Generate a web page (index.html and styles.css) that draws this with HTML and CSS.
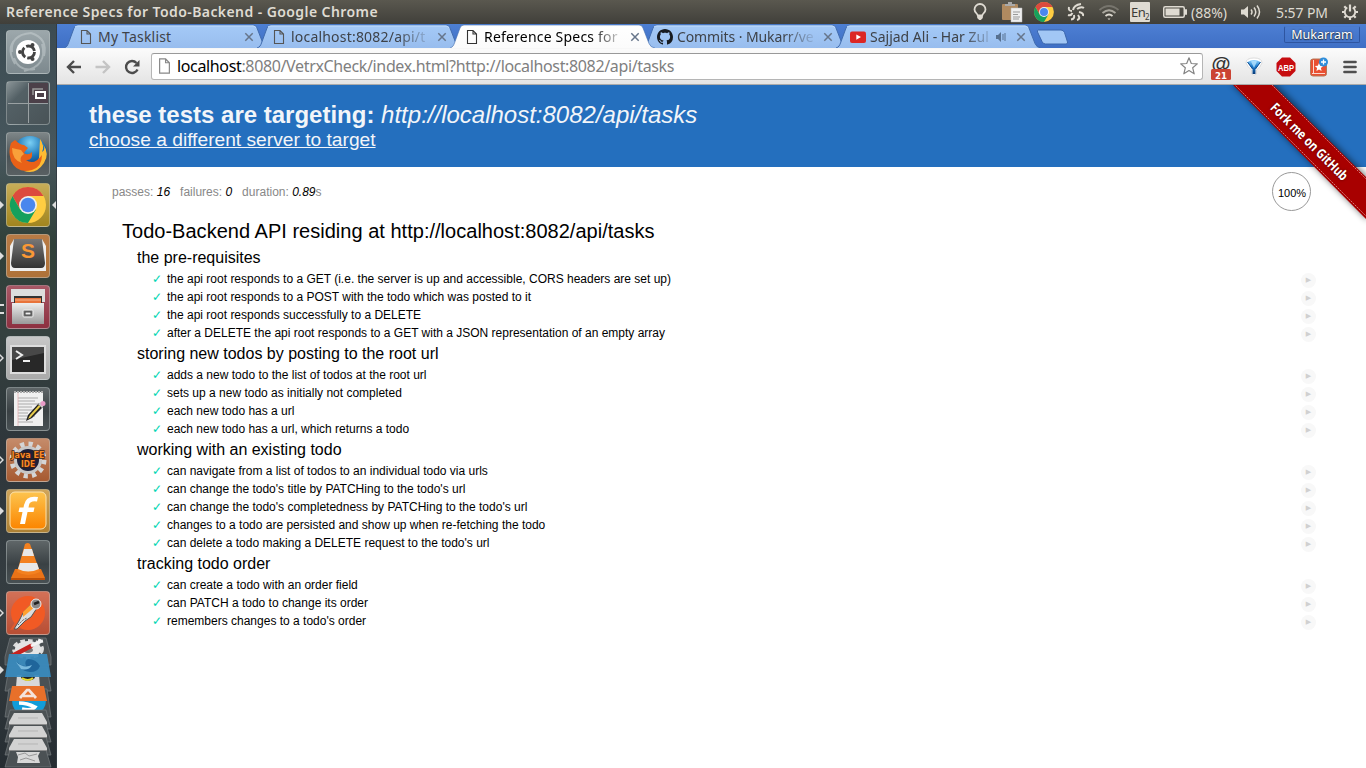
FILE: index.html
```html
<!DOCTYPE html>
<html lang="en">
<head>
<meta charset="utf-8">
<title>Reference Specs for Todo-Backend</title>
<link rel="stylesheet" href="styles.css">
</head>
<body>
<svg class="defs" width="0" height="0">
  <defs>
    <linearGradient id="tabFill" x1="0" y1="0" x2="0" y2="1"><stop offset="0" stop-color="#a5caf7"/><stop offset="1" stop-color="#98bdee"/></linearGradient>
    <linearGradient id="tabOn" x1="0" y1="0" x2="0" y2="1"><stop offset="0" stop-color="#fff"/><stop offset="1" stop-color="#fbfbfb"/></linearGradient>
    <linearGradient id="orange" x1="0" y1="0" x2="0" y2="1"><stop offset="0" stop-color="#fdc44e"/><stop offset="1" stop-color="#fb8500"/></linearGradient>
    <linearGradient id="silver" x1="0" y1="0" x2="0" y2="1"><stop offset="0" stop-color="#eee"/><stop offset="1" stop-color="#999"/></linearGradient>
    <linearGradient id="dark" x1="0" y1="0" x2="0" y2="1"><stop offset="0" stop-color="#777"/><stop offset="1" stop-color="#333"/></linearGradient>
    <linearGradient id="balloon" x1="0" y1="0" x2="0" y2="1"><stop offset="0" stop-color="#8fd4ff"/><stop offset=".45" stop-color="#1c7ccd"/><stop offset="1" stop-color="#093b78"/></linearGradient>
    <radialGradient id="globe" cx=".5" cy=".2" r=".8"><stop offset="0" stop-color="#7bd0f5"/><stop offset=".5" stop-color="#1d76b8"/><stop offset="1" stop-color="#0a2a66"/></radialGradient>
    <symbol id="page" viewBox="0 0 12 16"><path d="M1.500 1.500h5.500l3.500 3.500v9.500h-9zM7 1.500V5h3.500" fill="none" stroke="currentColor" stroke-width="1.100"/></symbol>
    <symbol id="close" viewBox="0 0 10 10"><path d="M1.300 1.300l7.400 7.400M8.700 1.300L1.300 8.700" stroke="currentColor" stroke-width="1.500"/></symbol>
    <symbol id="tab" viewBox="0 0 207 24"><path d="M0 24C3 23 3.500 21.500 4.500 19L10 4Q11 1 14 1H189Q192 1 193 4L199 19.500Q200.500 23.500 205 24" fill="url(#tabFill)" stroke="#416cae"/><path d="M11 3Q12 2 14 2H189Q191.500 2 192 4" fill="none" stroke="#c3dcfb"/></symbol>
    <symbol id="tabActive" viewBox="0 0 207 24"><path d="M0 24C3 23 3.500 21.500 4.500 19L10 4Q11 1 14 1H189Q192 1 193 4L199 19.500Q200.500 23.500 205 24" fill="url(#tabOn)" stroke="#416cae" stroke-opacity=".6"/></symbol>
    <symbol id="chrome" viewBox="0 0 40 40"><circle cx="20" cy="20" r="18" fill="#ffcd42"/><path d="M20 11H35.600A18 18 0 0 0 4.400 11L12 24z" fill="#dc4a3e"/><path d="M4.400 11A18 18 0 0 0 20 38L28 24.500H20L12.200 24.500z" fill="#16a05d"/><circle cx="20" cy="20" r="9" fill="#eee"/><circle cx="20" cy="20" r="7.300" fill="#4a87ed"/></symbol>
  </defs>
</svg>

<header class="panel">
  <span class="panel-title">Reference Specs for Todo-Backend - Google Chrome</span>
  <div class="indicators">
    <svg class="i-bulb" width="14" height="18" viewBox="0 0 14 18"><path d="M4.800 12.500C4.500 10.500 1.500 9.500 1.500 6.500A5.500 5.500 0 0 1 12.500 6.500C12.500 9.500 9.500 10.500 9.200 12.500z" fill="none" stroke="#dfdbd2" stroke-width="1.800"/><path d="M4.200 13h5.600v2l-2 2h-1.600l-2-2z" fill="#dfdbd2"/></svg>
    <svg class="i-clip" width="22" height="22" viewBox="0 0 22 22"><rect x="1" y="3" width="16" height="16" rx="1" fill="#b08a60"/><path d="M4 5V3h3V1h4v2h3v2z" fill="#aaa"/><path d="M10 7h11v14H10z" fill="#eee" stroke="#bbb" stroke-width=".5"/><path d="M12 11h7M12 13.500h5M12 16h7M12 18h6" stroke="#999"/></svg>
    <svg class="i-chrome" width="22" height="22"><use href="#chrome"/></svg>
    <svg class="i-swirl" width="18" height="20" viewBox="0 0 18 20"><g fill="none" stroke="#dfdbd2" stroke-width="2"><path d="M6 8Q7 3 14 2"/><path d="M10 7Q14 4 17 6"/><path d="M12 10Q17 11 16 14"/><path d="M11 13Q14 17 10 18"/><path d="M7 13Q8 17 4 17.500"/><path d="M5.500 11Q4 14 1 13"/><path d="M5 9Q1 9 2 5"/></g></svg>
    <svg class="i-wifi" width="22" height="18" viewBox="0 0 22 18"><g fill="none" stroke-width="1.800"><path d="M1.500 7Q11-1 20.500 7" stroke="#77756d"/><path d="M4.500 10Q11 4.500 17.500 10" stroke="#aaa79e"/><path d="M7.500 13Q11 10 14.500 13" stroke="#dfdbd2"/></g><path d="M9.500 15.500h3L11 17z" fill="#dfdbd2"/></svg>
    <span class="keyboard">En<sub>2</sub></span>
    <svg class="i-battery" width="25" height="12" viewBox="0 0 25 12"><rect x=".75" y=".75" width="20.500" height="10.500" rx="1.500" fill="none" stroke="#dfdbd2" stroke-width="1.500"/><rect x="2.500" y="2.500" width="14" height="7" fill="#dfdbd2"/><path d="M22.500 3.500h1v5h-1z" stroke="#dfdbd2" fill="none"/></svg>
    <span class="battery-text">(88%)</span>
    <svg class="i-sound" width="21" height="16" viewBox="0 0 21 16"><path d="M1 5.500h3L8 2v12L4 10.500H1z" fill="#dfdbd2"/><path d="M11 5.500q2 2.500 0 5M14 3.500q3.500 4.500 0 9M17 1.500q5 6.500 0 13" fill="none" stroke="#dfdbd2" stroke-width="1.500"/></svg>
    <span class="clock">5:57 PM</span>
    <svg class="i-gear" width="18" height="18" viewBox="0 0 18 18"><g stroke="#dfdbd2" stroke-width="2.200"><path d="M9 1.500v7"/><path d="M14.300 9H17M12.800 12.800l1.900 1.900M9 14.300V17M5.200 12.800l-1.900 1.900M3.700 9H1M5.200 5.200L3.300 3.300M12.800 5.200l1.900-1.900"/></g><path d="M6.300 4.600A5.200 5.200 0 1 0 11.700 4.600" fill="none" stroke="#dfdbd2" stroke-width="1.800"/></svg>
  </div>
</header>

<div class="desktop">
  <nav class="launcher">
    <div class="tile dash"><svg viewBox="0 0 44 44"><path d="M6 22Q4 5 25 3Q42 8 38 26M9 34Q-2 15 14 6M18 41Q42 36 36 14M8 28Q13 42 29 39" fill="none" stroke="#c9d1d4" stroke-opacity=".5" stroke-width="2"/><circle cx="22" cy="22" r="12" fill="#fff"/><circle cx="22.500" cy="22" r="6" fill="none" stroke="#444" stroke-width="2.800" stroke-dasharray="10.500 2.070"/><g fill="#444"><circle cx="14" cy="22" r="2"/><circle cx="26.500" cy="15" r="2"/><circle cx="26.500" cy="29" r="2"/></g></svg></div>
    <div class="tile workspace"><svg viewBox="0 0 44 44"><path d="M23 2h19v20H23z" fill="#4c4049"/><path d="M22.500 2v40M2 22.500h40" stroke="#9aa1a3" stroke-width="1"/><path d="M27 14V8h10" fill="none" stroke="#999" stroke-width="1.500"/><rect x="30" y="11" width="9" height="6" fill="none" stroke="#fff" stroke-width="2"/></svg></div>
    <div class="tile"><svg viewBox="0 0 44 44"><circle cx="24" cy="21" r="17" fill="url(#globe)"/><path d="M34 7Q39 14 36 20Q40 18 37 12Q44 22 38 31Q30 43 18 39Q30 36 33 26Z" fill="#fb3"/><path d="M5 11L9 8Q14 13 18 13L22 16Q19 19 18 21Q22 24 26 20Q27 29 20 28Q28 34 36 23Q36 35 26 38Q11 42 5 29Q2 19 5 11Z" fill="#e96118"/><path d="M6 16Q10 17 15 18L18 22Q12 26 16 31Q6 28 6 16Z" fill="#f9a03a"/></svg></div>
    <div class="tile chrome-tile pointed focus"><svg viewBox="0 0 44 44"><use href="#chrome" x="2" y="2" width="40" height="40"/></svg></div>
    <div class="tile sublime pointed"><svg viewBox="0 0 44 44"><path d="M4 12L8 5H36L40 12V37H4z" fill="#eee"/><path d="M8 5H36L39 29Q39 34 35 34H9Q5 34 5 29z" fill="url(#dark)"/><text x="22" y="24" class="sublime-s" text-anchor="middle">S</text></svg></div>
    <div class="tile files pair"><svg viewBox="0 0 44 44"><path d="M5 4h34v13H5z" fill="#ddd"/><path d="M8 11h28v9H8z" fill="#333"/><path d="M9 13h26v7H9z" fill="#e8733a"/><path d="M9 15h26" stroke="#f4b48c"/><path d="M6 18h32v21H6z" fill="url(#silver)"/><rect x="17" y="25" width="10" height="7" rx="1" fill="#777" stroke="#eee"/><rect x="19" y="27" width="6" height="3" fill="#eee" stroke="#444"/></svg></div>
    <div class="tile terminal hollow"><svg viewBox="0 0 44 44"><rect x="4" y="9" width="36" height="29" fill="#ddd"/><rect x="6" y="11" width="32" height="25" fill="#282828"/><path d="M6 11h32v6L6 24z" fill="#484848"/><path d="M10 15l6 4-6 4M17 25h7" fill="none" stroke="#eee" stroke-width="2"/></svg></div>
    <div class="tile plain"><svg viewBox="0 0 44 44"><path d="M8 5h29v34H8z" fill="#f0f0f0"/><path d="M8 5h29" stroke="#aaa" stroke-width="2" stroke-dasharray="2 1"/><path d="M12 11h20M12 14h17M12 17h20M12 20h14M12 23h18M12 26h10M12 29h17M12 32h9M12 35h15" stroke="#aaa"/><path d="M12 6v33" stroke="#e5aaaa" stroke-width=".7"/><path d="M20 34l2-6 11-12 4 4-11 11z" fill="#222"/><path d="M22 32l2-4 9-10 1.500 1.500-10 11z" fill="#e8cc4a"/><path d="M32 17l3-2 3 3-2 3z" fill="#ccc"/><circle cx="37" cy="16.500" r="2.500" fill="#ea9bc7"/></svg></div>
    <div class="tile java hollow"><svg viewBox="0 0 44 44"><circle cx="22" cy="22" r="16" fill="none" stroke="#d5d5d5" stroke-width="5" stroke-dasharray="4.200 4.180"/><circle cx="22" cy="22" r="12.500" fill="#1e2038" stroke="#c7c7c7" stroke-width="3"/><text x="22" y="20" class="java-text" textLength="33" lengthAdjust="spacingAndGlyphs" text-anchor="middle">Java EE</text><text x="22" y="29" class="java-text" textLength="14" lengthAdjust="spacingAndGlyphs" text-anchor="middle">IDE</text></svg></div>
    <div class="tile font pointed"><svg viewBox="0 0 44 44"><rect x="4" y="3" width="36" height="37" rx="5" fill="url(#orange)" stroke="#fde3ae"/><path d="M32 8Q20 6 18 16L17.500 18.500H13.500L12.500 23H16.500L14 35H19L21.500 23H27.500L28.500 18.500H22.500L23 16Q24 11.500 31 12.500z" fill="#fff"/></svg></div>
    <div class="tile plain"><svg viewBox="0 0 44 44"><path d="M9 29H35L39 38H5z" fill="#ea7317"/><path d="M5 38h34v2H5z" fill="#be5008"/><path d="M19 4Q22 2 24 4L34 32Q22 38 11 32z" fill="#f38120"/><path d="M18 9h8l2 7H16zM14 23h17l2 6Q22 34 12 29z" fill="#e8e8e8"/></svg></div>
    <div class="tile postman hollow"><svg viewBox="0 0 44 44"><circle cx="22" cy="22" r="17" fill="#f15a24"/><path d="M4 39L9 31 16 37z" fill="#e15a2e"/><path d="M27 11L31 17 25 26 19 30 11 38H8L13 30 17 22z" fill="#ddd" stroke="#555"/><path d="M17 21L27 11 30 15 17 26z" fill="#ffa030"/><path d="M12 34l5-5 4-2" stroke="#666" stroke-dasharray="2 1" fill="none"/><circle cx="30" cy="13" r="5" fill="#888" stroke="#eee"/><path d="M28 13l5-2" stroke="#222" stroke-width="2.500"/></svg></div>
    <svg class="stack" width="57" height="131" viewBox="0 0 57 131">
      <path d="M10 1H46L51 20V28H5V20z" fill="#4b5154" stroke="#757b7e" stroke-width=".7"/>
      <ellipse cx="28" cy="12" rx="14" ry="8" fill="none" stroke="#dcdcdc" stroke-width="4" stroke-dasharray="4.500 3"/><ellipse cx="28" cy="12" rx="13" ry="8" fill="#e4e4e4"/><ellipse cx="28" cy="13" rx="5" ry="3" fill="#777"/><path d="M12 19L31 9" stroke="#c5221f" stroke-width="4.500" stroke-linecap="round"/><path d="M31 9l8-4 1-3M38 5l5-1" stroke="#f2f2f2" stroke-width="3" fill="none"/>
      <path d="M9 30H47L51 54H5z" fill="#4b5154" stroke="#757b7e" stroke-width=".7"/><path d="M17 38h22l1 12H16z" fill="#d8d8d8"/><ellipse cx="28" cy="40" rx="7" ry="3.500" fill="#222"/><path d="M22 41q6 4 11 0" stroke="#e5d62d" fill="none" stroke-width="2"/>
      <path d="M9 17H47L51 40H5z" fill="#398abd" fill-opacity=".94"/><path d="M17 22q0 7 9 7-2-5 2-7 8 0 12 7-2 6-10 6-12-1-13-13z" fill="#1f659b"/><path d="M16 25q8 7 16 3-3 6-11 4z" fill="#79b9dd"/>
      <path d="M9 52H47L51 80H5z" fill="#4b5154" stroke="#757b7e" stroke-width=".7"/>
      <path d="M12 63H46Q46 74 36 76H21Q12 74 12 63z" fill="#129cd9"/><path d="M19 66q8 0 16 4-3 4-13 2" stroke="#fff" stroke-width="3.500" fill="none"/>
      <path d="M12 49H44L47 64H9z" fill="#e8702a"/><path d="M20 61l7-8h2l7 8M23 59h10" fill="none" stroke="#f4e4dc" stroke-width="2.700"/>
      <g fill="#4b5154" stroke="#757b7e" stroke-width=".7"><path d="M10 73H46L51 92H5z"/><path d="M10 87H46L51 105H5z"/><path d="M10 100H46L51 118H5z"/><path d="M10 113H46L51 130H5z"/></g>
      <path d="M14 76H42L47 85V88H9V85zM14 89H42L47 98V101H9V98zM14 102H42L47 111V114H9V111z" fill="#d2d2d2"/>
      <path d="M9 87.500h38M9 100.500h38M9 113.500h38" stroke="#898989"/><path d="M18 81h20M18 94h20M18 107h20" stroke="#b5b5b5"/>
      <path d="M16 115h24l-2 4 2 7H17l1-6z" fill="#d8d8d8"/><path d="M18 118l7-2 4 3 8-2M20 123l6-2 9 3" stroke="#999" fill="none"/><path d="M0 29l4 4-4 4z" fill="#ddd"/>
    </svg>
  </nav>

  <main class="window">
    <div class="tabstrip">
      <div class="tab"><svg class="tab-bg"><use href="#tab"/></svg><svg class="favicon file"><use href="#page"/></svg><span class="tab-title t1">My Tasklist</span><svg class="tab-close"><use href="#close"/></svg></div>
      <div class="tab"><svg class="tab-bg"><use href="#tab"/></svg><svg class="favicon file"><use href="#page"/></svg><span class="tab-title t2">localhost:8082/api/t</span><svg class="tab-close"><use href="#close"/></svg></div>
      <div class="tab active"><svg class="tab-bg"><use href="#tabActive"/></svg><svg class="favicon file"><use href="#page"/></svg><span class="tab-title t3">Reference Specs for</span><svg class="tab-close"><use href="#close"/></svg></div>
      <div class="tab"><svg class="tab-bg"><use href="#tab"/></svg><svg class="favicon" viewBox="0 0 16 16"><path d="M8 0C3.580 0 0 3.580 0 8c0 3.540 2.290 6.530 5.470 7.590.4.070.55-.17.55-.38 0-.19-.01-.82-.01-1.490-2.010.37-2.530-.49-2.690-.94-.09-.23-.48-.94-.82-1.130-.28-.15-.68-.52-.01-.53.63-.01 1.080.58 1.230.82.72 1.210 1.870.87 2.330.66.07-.52.28-.87.51-1.070-1.780-.2-3.640-.89-3.640-3.950 0-.87.31-1.590.82-2.150-.08-.2-.36-1.020.08-2.120 0 0 .67-.21 2.200.82.64-.18 1.320-.27 2-.27s1.360.09 2 .27c1.530-1.040 2.200-.82 2.200-.82.44 1.100.16 1.920.08 2.120.51.56.82 1.270.82 2.150 0 3.070-1.870 3.750-3.650 3.950.29.25.54.73.54 1.480 0 1.070-.01 1.930-.01 2.200 0 .21.15.46.55.38A8.010 8.010 0 0 0 16 8c0-4.420-3.580-8-8-8z" fill="#171b21"/></svg><span class="tab-title t4">Commits · Mukarr/ve</span><svg class="tab-close"><use href="#close"/></svg></div>
      <div class="tab"><svg class="tab-bg"><use href="#tab"/></svg><svg class="favicon" viewBox="0 0 16 16"><rect y="2.500" width="16" height="11.500" rx="2" fill="#dc2725"/><path d="M6.300 5.500v5.200L11 8.100z" fill="#fff"/></svg><span class="tab-title t5">Sajjad Ali - Har Zul</span><svg class="audio" viewBox="0 0 11 10"><path d="M0 3h2l3-3v10L2 7H0z" fill="#57708f"/><path d="M7 2v6M9 1v8" stroke="#57708f"/></svg><svg class="tab-close"><use href="#close"/></svg></div>
      <svg class="new-tab" width="33" height="16" viewBox="0 0 33 16"><path d="M2.500 1H25Q27.500 1 28.500 3.500L31.500 13Q32 15 30 15H9.500Q7 15 6 12.500L1.500 3Q1 1 2.500 1z" fill="#a2c7f5" stroke="#3b66ac"/></svg>
      <span class="profile">Mukarram</span>
    </div>
    <div class="toolbar">
      <svg class="nav-icon" width="16" height="16" viewBox="0 0 16 16"><path d="M15 8H3M8 2L2 8l6 6" fill="none" stroke="#4c4c4c" stroke-width="2.400"/></svg>
      <svg class="nav-icon" width="16" height="16" viewBox="0 0 16 16"><path d="M.5 8H13M8 2l6 6-6 6" fill="none" stroke="#c4c4c4" stroke-width="2.400"/></svg>
      <svg class="nav-icon" width="16" height="16" viewBox="0 0 16 16"><path d="M13.500 10.500A6 6 0 1 1 12.500 4" fill="none" stroke="#4c4c4c" stroke-width="2.400"/><path d="M15.500 1v6.500H9z" fill="#4c4c4c"/></svg>
      <div class="omnibox">
        <svg class="omni-page"><use href="#page"/></svg>
        <span class="url"><b>localhost</b>:8080/VetrxCheck/index.html?http://localhost:8082/api/tasks</span>
        <svg class="star" width="20" height="20" viewBox="0 0 20 20"><path d="M10 1.800l2.300 5.700 6 .4-4.600 3.900 1.500 6L10 14.500l-5.200 3.300 1.500-6L1.700 7.900l6-.4z" fill="none" stroke="#858585" stroke-width="1.200" stroke-linejoin="round"/></svg>
      </div>
      <div class="extensions">
        <svg class="ext-at" width="22" height="26" viewBox="0 0 22 26"><text x="11" y="14.500" class="at" textLength="19" lengthAdjust="spacingAndGlyphs" text-anchor="middle">@</text><rect x="1" y="14" width="20" height="11" rx="1.500" fill="#cb4434"/><text x="11" y="23.500" class="badge" textLength="12" lengthAdjust="spacingAndGlyphs" text-anchor="middle">21</text></svg>
        <svg width="18" height="20" viewBox="0 0 18 20"><path d="M1 6Q1 1 9 1T17 6Q16 9 11.500 13V17Q9 19.500 6.500 17V13Q2 9 1 6z" fill="#fff" stroke="#c8c8c8" stroke-width=".6"/><path d="M2.500 5Q9 1 15.500 5L10.500 12V17H7.500V12z" fill="url(#balloon)"/><path d="M2.500 5L7.500 12M15.500 5L10.500 12" stroke="#0a4a90"/><path d="M6 4.500q3-1.500 6 0L9 11z" fill="#b5e4ff" opacity=".8"/></svg>
        <svg class="ext-abp" width="20" height="20" viewBox="0 0 20 20"><path d="M6 .5h8L19.500 6v8L14 19.500H6L.5 14V6z" fill="#c70d10"/><text x="10" y="13.600" class="abp" textLength="16" lengthAdjust="spacingAndGlyphs" text-anchor="middle">ABP</text></svg>
        <svg class="ext-book" width="20" height="20" viewBox="0 0 20 20"><rect x="1.500" y="2" width="16" height="17" rx="2.500" fill="#e94f31" stroke="#b77756"/><path d="M4.500 3v13M3 16.500h13" stroke="#fbd9cf"/><path d="M10 6l1.200 2.800 3 .2-2.300 2 .7 3-2.600-1.600L7.400 14l.7-3-2.300-2 3-.2z" fill="#fff"/><circle cx="14.500" cy="5" r="4.500" fill="#2e8dda"/><path d="M14.500 2.500v5M12 5h5" stroke="#fff" stroke-width="1.300"/></svg>
        <svg width="14" height="14" viewBox="0 0 14 14"><path d="M1.500 2h11M1.500 7h11M1.500 12h11" stroke="#4f4f4f" stroke-width="2.700" stroke-linecap="round"/></svg>
      </div>
    </div>

    <section class="page">
      <div class="banner">
        <h1><strong>these tests are targeting:</strong> <em>http://localhost:8082/api/tasks</em></h1>
        <a>choose a different server to target</a>
      </div>
      <svg class="ribbon" width="149" height="149" viewBox="0 0 149 149">
        <defs><filter id="shade" x="-10%" y="-10%" width="120%" height="120%"><feGaussianBlur stdDeviation="3"/></filter></defs>
        <path d="M14-2H58L151 92V136z" fill="#000" opacity=".5" filter="url(#shade)"/>
        <path d="M14-2H54L151 94V136z" fill="#a80000"/>
        <path d="M17-1L150 132M55 0L150 95" stroke="#d57575" stroke-width="1" stroke-dasharray="2 1"/>
        <text class="ribbon-text" transform="translate(89 60) rotate(45)" text-anchor="middle" textLength="103" lengthAdjust="spacingAndGlyphs">Fork me on GitHub</text>
      </svg>
      <div class="report-head">
        <ul class="stats"><li>passes: <em>16</em></li><li>failures: <em>0</em></li><li>duration: <em>0.89</em>s</li></ul>
        <div class="progress">100%</div>
      </div>
      <div class="report">
        <h2>Todo-Backend API residing at http://localhost:8082/api/tasks</h2>
        <h3>the pre-requisites</h3>
        <ul class="tests"><li>the api root responds to a GET (i.e. the server is up and accessible, CORS headers are set up)</li><li>the api root responds to a POST with the todo which was posted to it</li><li>the api root responds successfully to a DELETE</li><li>after a DELETE the api root responds to a GET with a JSON representation of an empty array</li></ul>
        <h3>storing new todos by posting to the root url</h3>
        <ul class="tests"><li>adds a new todo to the list of todos at the root url</li><li>sets up a new todo as initially not completed</li><li>each new todo has a url</li><li>each new todo has a url, which returns a todo</li></ul>
        <h3>working with an existing todo</h3>
        <ul class="tests"><li>can navigate from a list of todos to an individual todo via urls</li><li>can change the todo's title by PATCHing to the todo's url</li><li>can change the todo's completedness by PATCHing to the todo's url</li><li>changes to a todo are persisted and show up when re-fetching the todo</li><li>can delete a todo making a DELETE request to the todo's url</li></ul>
        <h3>tracking todo order</h3>
        <ul class="tests"><li>can create a todo with an order field</li><li>can PATCH a todo to change its order</li><li>remembers changes to a todo's order</li></ul>
      </div>
    </section>
  </main>
</div>
</body>
</html>
```
FILE: styles.css
```css
* { box-sizing: border-box; }
body { margin: 0; width: 1366px; height: 768px; overflow: hidden; display: flex; flex-direction: column; font-family: "Noto Sans", "Open Sans", sans-serif; }
svg { display: block; flex: none; }
.defs { position: absolute; }
ul, h1, h2, h3 { margin: 0; padding: 0; list-style: none; font-weight: normal; }

.panel { height: 24px; flex: none; display: flex; align-items: center; justify-content: space-between; padding: 0 7px 0 6px; background: linear-gradient(#5a584f, #403f3a); color: #dfdbd2; white-space: nowrap; }
.panel-title { font-size: 14px; font-weight: 600; line-height: 24px; letter-spacing: .42px; }
.indicators { display: flex; align-items: center; height: 24px; font-size: 14px; }
.i-clip { margin-left: 14px; }
.i-chrome { margin-left: 10px; }
.i-swirl { margin-left: 12px; }
.i-wifi { margin-left: 13px; }
.keyboard { margin-left: 10px; width: 20px; height: 20px; background: #dfdbd2; color: #3c3b37; font-size: 13px; letter-spacing: -.6px; line-height: 20px; padding-left: 1px; border-radius: 1px; }
.keyboard sub { font-size: 8px; line-height: 1px; vertical-align: -3px; }
.i-battery { margin-left: 13px; }
.battery-text { margin-left: 3px; width: 38px; letter-spacing: 0; }
.i-sound { margin-left: 11px; }
.clock { margin-left: 15px; width: 53px; letter-spacing: -.1px; }
.i-gear { margin-left: 12px; }

.desktop { flex: 1; display: flex; min-height: 0; }
.launcher { position: relative; width: 57px; flex: none; padding: 6px 0 0 6px; display: flex; flex-direction: column; gap: 7px; background: linear-gradient(#3c4b52 0, #47575d 130px, #304039 220px, #35413f 310px, #2e363b 420px, #363e42 600px, #262d32); border-right: 1px solid #333c43; }
.tile { position: relative; width: 44px; height: 44px; flex: none; border: 1px solid rgba(190,200,200,.45); border-radius: 4px; background: linear-gradient(#7d8587, #4b5356 55%, #596063); }
.tile svg { width: 44px; height: 44px; margin: -1px; }
.dash { background: linear-gradient(#9ca7ab, #7d898e); }
.plain { background: linear-gradient(#5f6668, #3a4144 55%, #485053); }
.workspace { background: linear-gradient(135deg, #8b9598, #536065 30%, #495357); }
.chrome-tile { background: linear-gradient(#c7ad58, #a2851e); }
.sublime { background: linear-gradient(#b87b45, #ae7239); }
.files { background: linear-gradient(#a85866, #8d3040); }
.terminal { background: linear-gradient(#c7c7c7, #aaa); }
.java { background: linear-gradient(#c58b6a, #a65a31); }
.font { background: linear-gradient(#d0a55a, #ae8134); }
.postman { background: linear-gradient(#d37157, #b84e34); }
.pointed::before, .hollow::before { content: ""; position: absolute; left: -7px; top: 17px; border: 4px solid transparent; border-left-color: #ddd; border-right: 0; }
.hollow::after { content: ""; position: absolute; left: -8px; top: 18px; border: 3px solid transparent; border-left-color: #353d40; border-right: 0; }
.focus::after { content: ""; position: absolute; left: 45px; top: 17px; border: 4px solid transparent; border-right-color: #ddd; border-left: 0; }
.pair::before { content: ""; position: absolute; left: -7px; top: 18px; width: 4px; height: 6px; border: 2px solid #ddd; border-width: 2px 0; }
.stack { margin: -5px 0 0 -6px; }

.sublime-s { font: bold 21px "Liberation Sans", sans-serif; fill: #f99835; }
.java-text { font: bold 8.5px "DejaVu Sans", sans-serif; fill: #fa8a28; stroke: #3a1d10; stroke-width: 1.5px; paint-order: stroke; }

.window { flex: 1; min-width: 0; display: flex; flex-direction: column; background: #fff; }
.tabstrip { position: relative; z-index: 1; height: 24px; flex: none; display: flex; padding-left: 7px; background: linear-gradient(#4d7fd3, #3f6fc5); }
.tab { position: relative; isolation: isolate; width: 207px; height: 24px; margin-right: -14px; flex: none; display: flex; align-items: center; padding-left: 14px; color: #555; }
.tab.active { z-index: 2; color: #333; }
.tab-bg { position: absolute; left: 0; top: 0; width: 207px; height: 24px; overflow: visible; z-index: -1; }
.favicon { width: 16px; height: 16px; margin-top: 1px; }
.tab-title { margin-left: 4px; width: 144px; height: 24px; line-height: 25px; font-size: 14px; letter-spacing: -.1px; white-space: nowrap; color: #3e4248; }
.active .tab-title { color: #000; }
.t1 { letter-spacing: .2px; }
.tab-title.t2, .tab-title.t3 { letter-spacing: .2px; }
.t2, .t3, .t4 { -webkit-mask-image: linear-gradient(90deg, #000 106px, transparent 141px); mask-image: linear-gradient(90deg, #000 106px, transparent 141px); }
.t5 { letter-spacing: 0; width: 126px; -webkit-mask-image: linear-gradient(90deg, #000 94px, transparent 125px); mask-image: linear-gradient(90deg, #000 94px, transparent 125px); }
.audio { width: 11px; height: 10px; margin: 1px 7px 0 0; }
.tab-close { width: 10px; height: 10px; margin: 2px 0 0 2px; color: #66758a; }
.new-tab { margin: 5px 0 0 7px; }
.profile { position: absolute; right: 6px; top: 2px; width: 76px; height: 17px; border: 1px solid #2e55a0; border-top-color: #4c7acb; border-radius: 2px; text-align: center; color: #fff; font-size: 12.5px; line-height: 16px; text-shadow: 0 0 2px #234, 0 1px 1px #234; }

.toolbar { height: 37px; flex: none; display: flex; align-items: center; padding: 0 9px 0 9px; background: linear-gradient(#fbfbfb, #e4e4e4); border-top: 1px solid #f7f7f7; border-bottom: 1px solid #aaa; }
.nav-icon { margin-right: 13px; }
.omnibox { margin-left: -2px; margin-top: -1px; width: 1052px; height: 27px; flex: none; display: flex; align-items: center; padding: 0 3px 0 6px; background: #fff; border: 1px solid #b5b5b5; border-top-color: #999; border-radius: 3px; }
.omni-page { width: 13px; height: 18px; color: #888; }
.url { flex: 1; margin-left: 6px; color: #808080; font-size: 16px; letter-spacing: -.355px; white-space: nowrap; }
.url b { font-weight: normal; color: #000; }
.extensions { flex: 1; display: flex; align-items: center; justify-content: space-between; padding-left: 7px; }
.ext-at { margin-top: 3px; overflow: visible; }
.ext-abp, .ext-book { position: relative; left: -1px; }
.at { font: bold 18px "Liberation Sans", sans-serif; fill: #333; }
.badge { font: bold 9.5px "DejaVu Sans", sans-serif; fill: #fff; }
.abp { font: bold 9.5px "Liberation Sans", sans-serif; fill: #fff; }

.page { position: relative; flex: 1; overflow: hidden; background: #fff; font-family: "Liberation Sans", Arial, sans-serif; color: #000; }
.banner { height: 82px; padding: 16px 32px; background: #246fbe; color: #f2f5f9; }
.banner h1 { font-size: 24px; line-height: 28px; white-space: nowrap; }
.banner a { display: block; font-size: 19.2px; line-height: 22px; text-decoration: underline; }
.ribbon { position: absolute; right: 0; top: 0; }
.ribbon-text { font: bold 13.5px "Open Sans", sans-serif; fill: #fff; text-shadow: 0 0 3px #500; }
.report-head { height: 49px; display: flex; justify-content: space-between; padding: 5px 55px 0; }
.stats { display: flex; padding-top: 11px; font-size: 12px; line-height: 18px; color: #888; }
.stats li { margin-right: 10px; }
.stats em { color: #000; }
.progress { width: 39px; height: 39px; border: 1px solid #999; border-radius: 50%; text-align: center; font-size: 11px; line-height: 40px; padding-left: 1px; white-space: nowrap; }
.report { padding: 0 50px 0 65px; }
.report h2 { font-size: 20px; line-height: 30px; letter-spacing: .018px; }
.report h3 { margin-left: 15px; font-size: 16px; line-height: 24px; }
.tests { margin-left: 30px; }
.tests li { display: flex; align-items: center; height: 18px; font-size: 12px; line-height: 18px; white-space: nowrap; }
.tests li::before { content: "✓"; width: 15px; flex: none; color: #00d6b2; font-size: 12px; }
.tests li::after { content: "▶"; width: 15px; height: 15px; margin: 2px 0 0 auto; border-radius: 50%; background: #f8f8f8; color: #d0d0d0; font: 7px/14px "DejaVu Sans", sans-serif; text-align: center; }
```
